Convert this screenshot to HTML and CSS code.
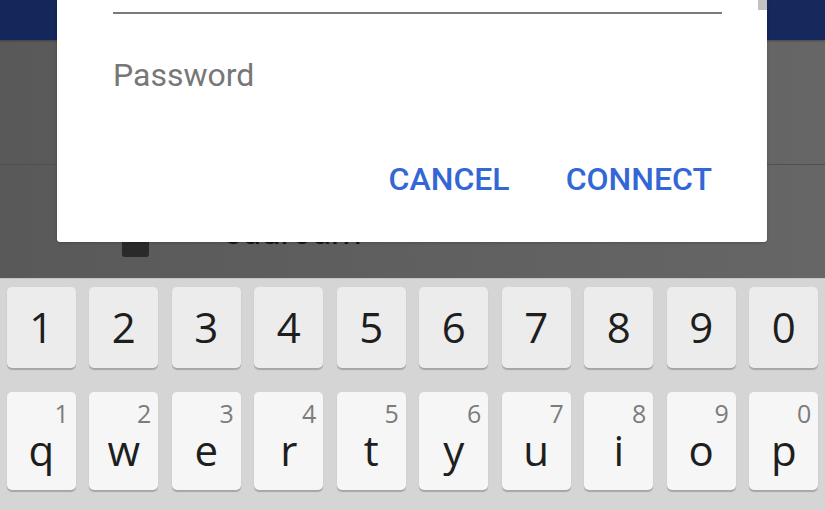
FILE: index.html
```html
<!DOCTYPE html>
<html lang="en">
<head>
<meta charset="UTF-8">
<meta name="viewport" content="width=device-width, initial-scale=1.0">
<title>Wi-Fi password</title>
<link rel="stylesheet" href="styles.css">
</head>
<body>
<div class="screen">
    <div class="appbar"></div>
    <div class="list">
        <div class="row row-top"></div>
        <div class="row">
            <span class="wifi-icon"></span>
            <span class="ssid">eduroam</span>
        </div>
    </div>
    <div class="dialog">
        <div class="scroll-thumb"></div>
        <div class="field-line"></div>
        <div class="field-label">Password</div>
        <div class="actions">
            <span class="btn">CANCEL</span>
            <span class="btn">CONNECT</span>
        </div>
    </div>
</div>
<div class="keyboard">
    <div class="key-row numbers">
        <div class="key">1</div>
        <div class="key">2</div>
        <div class="key">3</div>
        <div class="key">4</div>
        <div class="key">5</div>
        <div class="key">6</div>
        <div class="key">7</div>
        <div class="key">8</div>
        <div class="key">9</div>
        <div class="key">0</div>
    </div>
    <div class="key-row letters">
        <div class="key"><span class="hint">1</span><span class="char">q</span></div>
        <div class="key"><span class="hint">2</span><span class="char">w</span></div>
        <div class="key"><span class="hint">3</span><span class="char">e</span></div>
        <div class="key"><span class="hint">4</span><span class="char">r</span></div>
        <div class="key"><span class="hint">5</span><span class="char">t</span></div>
        <div class="key"><span class="hint">6</span><span class="char">y</span></div>
        <div class="key"><span class="hint">7</span><span class="char">u</span></div>
        <div class="key"><span class="hint">8</span><span class="char">i</span></div>
        <div class="key"><span class="hint">9</span><span class="char">o</span></div>
        <div class="key"><span class="hint">0</span><span class="char">p</span></div>
    </div>
</div>
</body>
</html>
```
FILE: styles.css
```css
body, html {
    margin: 0;
    padding: 0;
    width: 825px;
    height: 510px;
    overflow: hidden;
    font-family: Roboto, "Noto Sans", sans-serif;
}
.screen {
    position: relative;
    height: 278px;
    background: linear-gradient(90deg, #595959, #666666);
}
.appbar {
    height: 40px;
    background: linear-gradient(90deg, #14275a, #15295c);
    box-shadow: 0 1px 2px rgba(0, 0, 0, 0.3);
}
.row-top {
    height: 124px;
    border-bottom: 1px solid #4f4f4f;
}
.row {
    display: flex;
    align-items: flex-start;
}
.wifi-icon {
    width: 27px;
    height: 21px;
    margin: 71px 0 0 122px;
    background: #2a2a2a;
    border-radius: 3px;
}
.ssid {
    margin: 50px 0 0 74px;
    font-size: 35px;
    line-height: 36px;
    color: #151515;
}
.dialog {
    position: absolute;
    left: 57px;
    top: 0;
    width: 710px;
    height: 242px;
    background: #ffffff;
    border-radius: 0 0 3px 3px;
    box-shadow: 0 1px 3px rgba(0, 0, 0, 0.2);
}
.scroll-thumb {
    position: absolute;
    right: 0;
    top: 0;
    width: 9px;
    height: 10px;
    background: #c2c2c2;
}
.field-line {
    height: 2px;
    margin: 12px 45px 0 56px;
    background: #7a7a7a;
}
.field-label {
    margin: 43px 0 0 56px;
    font-size: 32px;
    line-height: 36px;
    color: #777777;
}
.actions {
    display: flex;
    justify-content: flex-end;
    gap: 56px;
    margin: 66px 55px 0 0;
}
.btn {
    font-size: 32px;
    line-height: 40px;
    font-weight: 500;
    color: #3367d6;
}
.keyboard {
    height: 232px;
    box-sizing: border-box;
    padding-top: 8px;
    background: #d5d5d5;
    border-top: 1px solid #c6c6c6;
    font-family: "Open Sans", "DejaVu Sans", sans-serif;
    color: #1e1e1e;
}
.key-row {
    display: flex;
}
.key {
    flex: 1;
    margin: 0 6.75px;
    border-radius: 5px;
    box-shadow: 0 2px 1px rgba(0, 0, 0, 0.22);
}
.numbers .key {
    height: 81px;
    line-height: 80px;
    text-align: center;
    font-size: 42px;
    background: #ececec;
}
.letters {
    margin-top: 24px;
}
.letters .key {
    height: 98px;
    display: flex;
    flex-direction: column;
    background: #f6f6f6;
}
.hint {
    align-self: flex-end;
    margin: 9px 7px 0 0;
    font-size: 25px;
    line-height: 25px;
    color: #7c7c7c;
}
.char {
    text-align: center;
    font-size: 42px;
    line-height: 48px;
    margin-top: 0;
}
```
